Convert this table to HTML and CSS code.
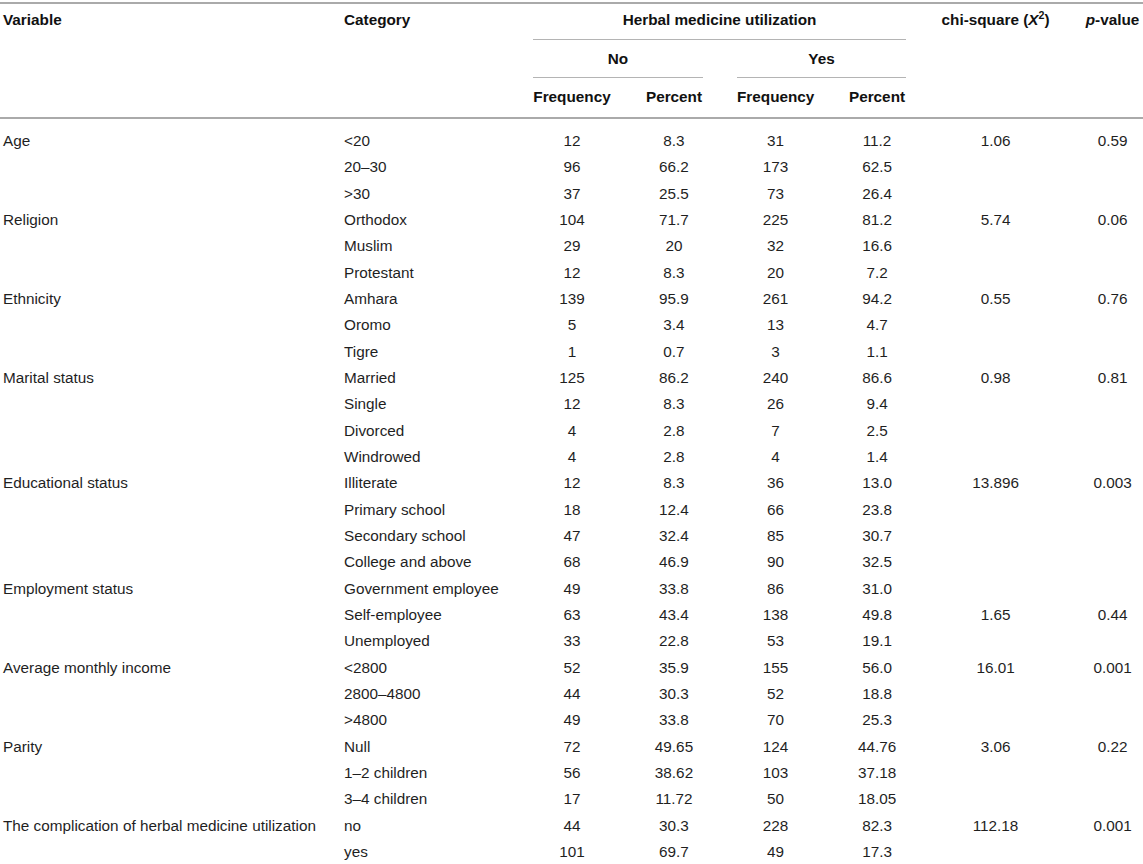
FILE: index.html
```html
<!DOCTYPE html>
<html>
<head>
<meta charset="utf-8">
<link rel="stylesheet" href="styles.css">
</head>
<body>
<div class="wrap">
<table class="tbl">
  <colgroup>
    <col class="c-var"><col class="c-cat"><col class="c-f1"><col class="c-p1"><col class="c-f2"><col class="c-p2"><col class="c-chi"><col class="c-pv">
  </colgroup>
  <thead>
    <tr class="h1">
      <th rowspan="3" class="left first">Variable</th>
      <th rowspan="3" class="left">Category</th>
      <th colspan="4" class="grp"><div class="gl gl1">Herbal medicine utilization</div></th>
      <th rowspan="3">chi-square (<i>X</i><sup>2</sup>)</th>
      <th rowspan="3" class="last"><i>p</i>-value</th>
    </tr>
    <tr class="h2">
      <th colspan="2" class="grp"><div class="gl gl2">No</div></th>
      <th colspan="2" class="grp"><div class="gl gl2">Yes</div></th>
    </tr>
    <tr class="h3">
      <th>Frequency</th><th>Percent</th><th>Frequency</th><th>Percent</th>
    </tr>
  </thead>
  <tbody>
    <tr class="r0"><td class="left first">Age</td><td class="left">&lt;20</td><td>12</td><td>8.3</td><td>31</td><td>11.2</td><td>1.06</td><td class="last">0.59</td></tr>
    <tr><td class="left first"></td><td class="left">20–30</td><td>96</td><td>66.2</td><td>173</td><td>62.5</td><td></td><td class="last"></td></tr>
    <tr><td class="left first"></td><td class="left">&gt;30</td><td>37</td><td>25.5</td><td>73</td><td>26.4</td><td></td><td class="last"></td></tr>

    <tr><td class="left first">Religion</td><td class="left">Orthodox</td><td>104</td><td>71.7</td><td>225</td><td>81.2</td><td>5.74</td><td class="last">0.06</td></tr>
    <tr><td class="left first"></td><td class="left">Muslim</td><td>29</td><td>20</td><td>32</td><td>16.6</td><td></td><td class="last"></td></tr>
    <tr><td class="left first"></td><td class="left">Protestant</td><td>12</td><td>8.3</td><td>20</td><td>7.2</td><td></td><td class="last"></td></tr>

    <tr><td class="left first">Ethnicity</td><td class="left">Amhara</td><td>139</td><td>95.9</td><td>261</td><td>94.2</td><td>0.55</td><td class="last">0.76</td></tr>
    <tr><td class="left first"></td><td class="left">Oromo</td><td>5</td><td>3.4</td><td>13</td><td>4.7</td><td></td><td class="last"></td></tr>
    <tr><td class="left first"></td><td class="left">Tigre</td><td>1</td><td>0.7</td><td>3</td><td>1.1</td><td></td><td class="last"></td></tr>

    <tr><td class="left first">Marital status</td><td class="left">Married</td><td>125</td><td>86.2</td><td>240</td><td>86.6</td><td>0.98</td><td class="last">0.81</td></tr>
    <tr><td class="left first"></td><td class="left">Single</td><td>12</td><td>8.3</td><td>26</td><td>9.4</td><td></td><td class="last"></td></tr>
    <tr><td class="left first"></td><td class="left">Divorced</td><td>4</td><td>2.8</td><td>7</td><td>2.5</td><td></td><td class="last"></td></tr>
    <tr><td class="left first"></td><td class="left">Windrowed</td><td>4</td><td>2.8</td><td>4</td><td>1.4</td><td></td><td class="last"></td></tr>

    <tr><td class="left first">Educational status</td><td class="left">Illiterate</td><td>12</td><td>8.3</td><td>36</td><td>13.0</td><td>13.896</td><td class="last">0.003</td></tr>
    <tr><td class="left first"></td><td class="left">Primary school</td><td>18</td><td>12.4</td><td>66</td><td>23.8</td><td></td><td class="last"></td></tr>
    <tr><td class="left first"></td><td class="left">Secondary school</td><td>47</td><td>32.4</td><td>85</td><td>30.7</td><td></td><td class="last"></td></tr>
    <tr><td class="left first"></td><td class="left">College and above</td><td>68</td><td>46.9</td><td>90</td><td>32.5</td><td></td><td class="last"></td></tr>

    <tr><td class="left first">Employment status</td><td class="left">Government employee</td><td>49</td><td>33.8</td><td>86</td><td>31.0</td><td></td><td class="last"></td></tr>
    <tr><td class="left first"></td><td class="left">Self-employee</td><td>63</td><td>43.4</td><td>138</td><td>49.8</td><td>1.65</td><td class="last">0.44</td></tr>
    <tr><td class="left first"></td><td class="left">Unemployed</td><td>33</td><td>22.8</td><td>53</td><td>19.1</td><td></td><td class="last"></td></tr>

    <tr><td class="left first">Average monthly income</td><td class="left">&lt;2800</td><td>52</td><td>35.9</td><td>155</td><td>56.0</td><td>16.01</td><td class="last">0.001</td></tr>
    <tr><td class="left first"></td><td class="left">2800–4800</td><td>44</td><td>30.3</td><td>52</td><td>18.8</td><td></td><td class="last"></td></tr>
    <tr><td class="left first"></td><td class="left">&gt;4800</td><td>49</td><td>33.8</td><td>70</td><td>25.3</td><td></td><td class="last"></td></tr>

    <tr><td class="left first">Parity</td><td class="left">Null</td><td>72</td><td>49.65</td><td>124</td><td>44.76</td><td>3.06</td><td class="last">0.22</td></tr>
    <tr><td class="left first"></td><td class="left">1–2 children</td><td>56</td><td>38.62</td><td>103</td><td>37.18</td><td></td><td class="last"></td></tr>
    <tr><td class="left first"></td><td class="left">3–4 children</td><td>17</td><td>11.72</td><td>50</td><td>18.05</td><td></td><td class="last"></td></tr>

    <tr><td class="left first">The complication of herbal medicine utilization</td><td class="left">no</td><td>44</td><td>30.3</td><td>228</td><td>82.3</td><td>112.18</td><td class="last">0.001</td></tr>
    <tr><td class="left first"></td><td class="left">yes</td><td>101</td><td>69.7</td><td>49</td><td>17.3</td><td></td><td class="last"></td></tr>
  </tbody>
</table>
</div>
</body>
</html>
```

FILE: styles.css
```css
html, body {
  margin: 0;
  padding: 0;
  background: #fff;
}
.wrap {
  padding-top: 2px;
}
.tbl {
  width: 1143px;
  table-layout: fixed;
  border-collapse: collapse;
  border-top: 2px solid #aaaaaa;
  font-family: "Liberation Sans", Arial, Helvetica, sans-serif;
  font-size: 15.3px;
  color: #1f1f1f;
}
.c-var { width: 327px; }
.c-cat { width: 189px; }
.c-f1 { width: 112px; }
.c-p1 { width: 92px; }
.c-f2 { width: 111px; }
.c-p2 { width: 92px; }
.c-chi { width: 145px; }
.c-pv { width: 75px; }

.tbl thead {
  border-bottom: 2px solid #aaaaaa;
}
.tbl th {
  font-weight: bold;
  color: #111;
  text-align: center;
  padding: 0 17px;
  white-space: nowrap;
}
.tbl th[rowspan] {
  vertical-align: top;
  line-height: 31px;
}
.tbl th.grp {
  padding: 0 17px;
}
.gl {
  border-bottom: 1px solid #b4b4b4;
}
.gl1 {
  line-height: 31px;
  padding-bottom: 4px;
}
.gl2 {
  line-height: 37px;
}
.h3 th {
  line-height: 37px;
  padding-bottom: 2px;
}
.tbl sup {
  font-size: 0.7em;
  line-height: 0;
}
.tbl td {
  text-align: center;
  padding: 0 17px;
  line-height: 26.33px;
  height: 26.33px;
  white-space: nowrap;
}
.tbl .left {
  text-align: left;
}
.tbl .first {
  padding-left: 3px;
}
.tbl .last {
  padding-right: 3px;
}
.tbl .r0 td {
  padding-top: 9px;
}
```
